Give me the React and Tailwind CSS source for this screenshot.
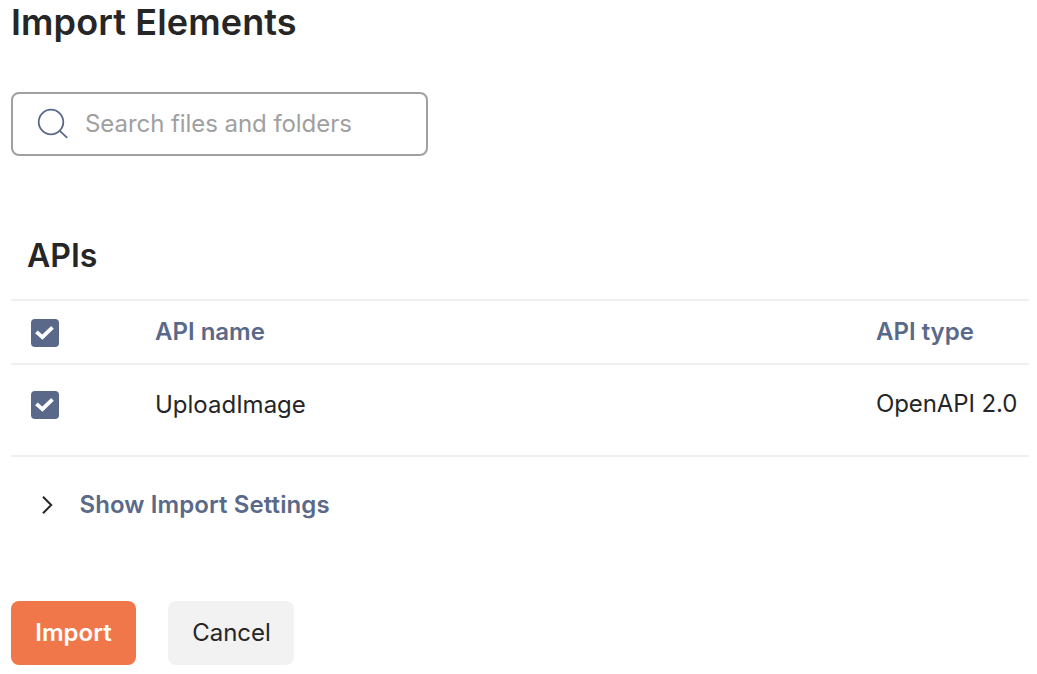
function Checkbox() {
  return (
    <span role="checkbox" aria-checked="true" className="flex size-7 items-center justify-center rounded-[4px] bg-[#5a698a]">
      <svg width="28" height="28" viewBox="0 0 28 28" fill="none">
        <path d="M5.4 12.8L11.4 18.2L21.5 8.4" stroke="#fff" strokeWidth="3.8" />
      </svg>
    </span>
  );
}

const row = "grid grid-cols-[124px_721px_1fr] border-b-2 border-[#efefef] pl-5";

export default function App() {
  return (
    <main className="flex h-[674px] w-[1037px] flex-col items-start overflow-hidden bg-white pl-[11px] font-['Inter',sans-serif] text-[24px] text-[#262626]">
      <h1 className="h-[92px] text-[36px] leading-[44px] font-semibold tracking-[0.12px] whitespace-nowrap">Import Elements</h1>
      <label className="flex h-16 w-[417px] items-center rounded-[8px] border-2 border-[#a0a0a0] pl-6">
        <svg width="32" height="32" viewBox="0 0 32 32" fill="none" stroke="#5a698a" strokeWidth="1.8" className="shrink-0">
          <circle cx="14" cy="14" r="12.3" />
          <path d="M22.8 22.8L30.2 29.8" />
        </svg>
        <input aria-label="Search" placeholder="Search files and folders" className="ml-4 w-[320px] bg-transparent leading-[30px] tracking-[-0.06px] outline-none placeholder:text-[#a0a0a0]" />
      </label>
      <h2 className="mt-[79px] h-16 pl-4 text-[32px] leading-[42px] font-semibold">APIs</h2>
      <section className="w-[1018px] border-t-2 border-[#efefef]">
        <div className={row + " h-16 font-semibold text-[#5a698a]"}>
          <span className="pt-[18px]"><Checkbox /></span>
          <span className="pt-4 leading-[30px]">API name</span>
          <span className="pt-4 leading-[30px] whitespace-nowrap">API type</span>
        </div>
        <div className={row + " h-[92px]"}>
          <span className="pt-[26px]"><Checkbox /></span>
          <span className="pt-[25px] leading-[30px]">UploadImage</span>
          <span className="pt-6 leading-[30px] tracking-[-0.1px] whitespace-nowrap">OpenAPI 2.0</span>
        </div>
      </section>
      <button className="mt-8 flex h-8 items-center pl-[31px] font-semibold text-[#5a698a]">
        <svg width="12" height="20" viewBox="0 0 12 20" fill="none" stroke="#262626" strokeWidth="2">
          <path d="M1 1.8L9.2 10L1 18.2" />
        </svg>
        <span className="ml-[25.5px] leading-[30px] tracking-[0.1px]">Show Import Settings</span>
      </button>
      <div className="mt-20 flex gap-8">
        <button className="h-16 w-[125px] rounded-[8px] bg-[#f0774a] font-semibold text-white">Import</button>
        <button className="h-16 w-[126px] rounded-[8px] bg-[#f2f2f2] pl-px">Cancel</button>
      </div>
    </main>
  );
}
